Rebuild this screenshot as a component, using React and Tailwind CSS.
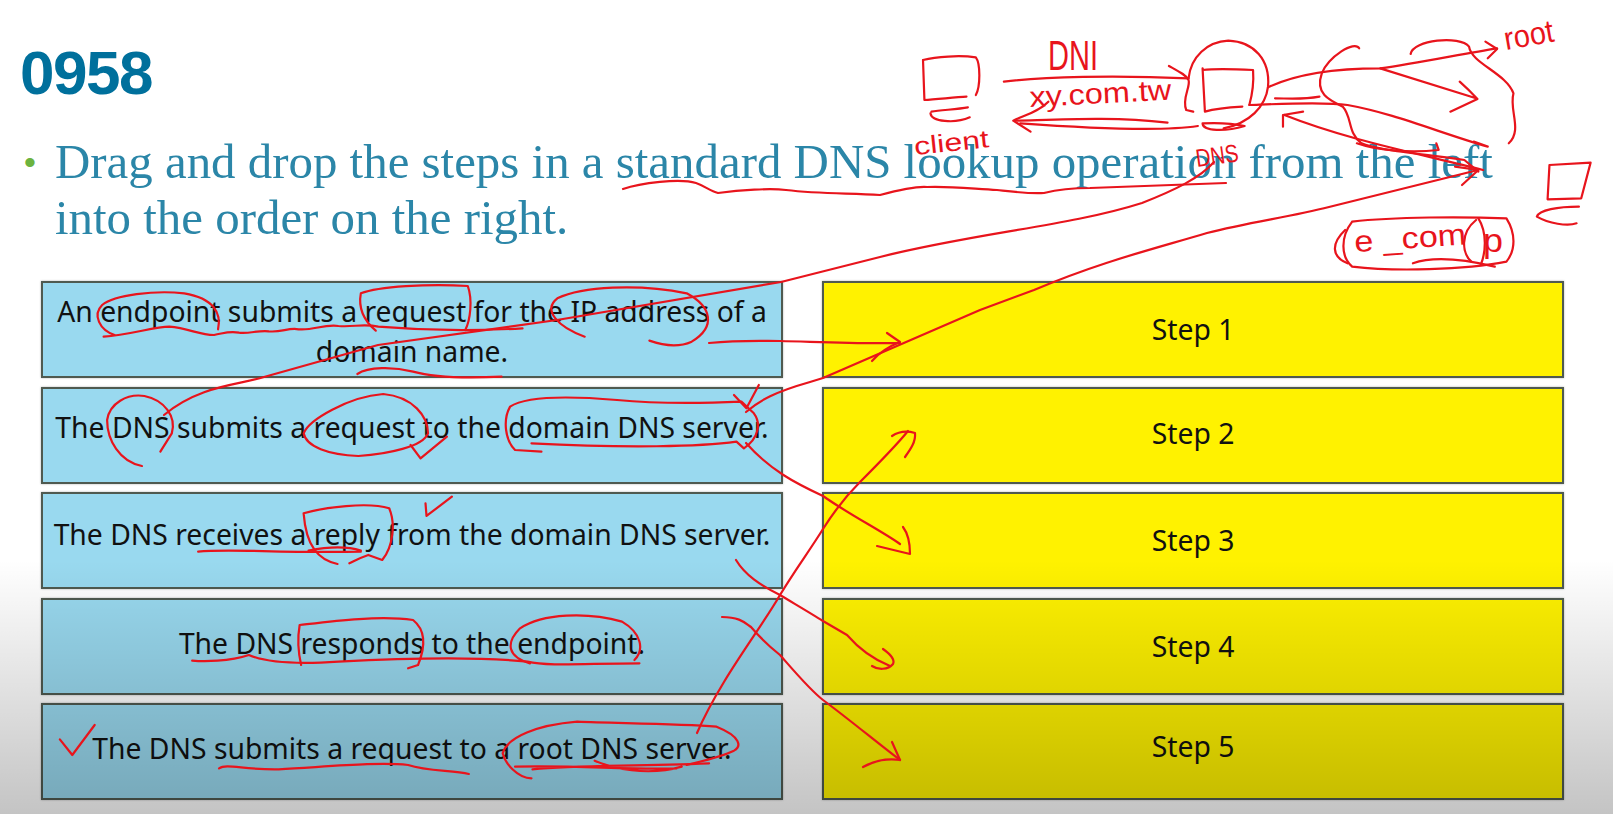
const RED = "#e8141c";

const Z1 = [
  "M92 180 C120 170 170 165 205 172 C215 190 215 260 205 285",
  "M92 180 L95 300 C120 298 160 292 185 290",
  "M110 335 C130 330 165 328 188 322 M108 340 C110 365 160 372 192 352",
  "M265 245 C350 230 500 225 660 235",
  "M618 198 C640 215 655 225 660 240 C665 260 645 295 655 330 L670 335",
  "M615 368 C500 350 400 358 290 362",
  "M680 378 C600 395 450 385 300 370",
  "M360 305 C340 335 310 345 285 362 L322 395",
  "M660 235 C665 170 700 125 745 122 C800 125 835 180 830 260 C825 320 790 370 735 385",
  "M690 205 L695 335 C720 325 750 322 775 320 M690 210 C720 205 770 208 798 210 C800 250 795 290 790 315",
  "M690 370 C690 395 740 395 780 378 C755 370 720 368 690 370",
  "M830 262 C900 215 1000 205 1070 205 C1150 190 1250 160 1320 145",
  "M1295 125 L1320 147 L1300 175",
  "M1070 205 L1275 295 M1240 245 C1260 270 1270 285 1278 297 L1220 335",
  "M790 315 C850 312 950 305 1000 315 C1100 340 1200 400 1300 440 L1270 425",
  "M845 295 C870 295 900 300 940 290",
  "M1290 510 C1150 460 1000 420 865 345",
  "M905 335 L862 345 L862 380",
  "M1025 145 C1015 120 960 170 945 220 C930 280 960 300 990 320 C1010 350 1000 400 1030 430 C1060 450 1150 460 1250 480 L1280 515",
  "M1135 162 C1140 120 1240 105 1260 140 C1265 190 1340 220 1355 280 C1345 330 1375 390 1345 430",
  "M1020 430 C1060 450 1130 460 1195 450 L1190 430",
  "M1230 500 L1280 510 L1245 555",
  "M1010 665 C1100 650 1250 650 1340 655 C1360 700 1360 750 1340 785 C1250 810 1100 815 1010 800 C985 770 985 710 1010 665",
  "M995 690 C965 730 965 770 1000 790",
  "M1275 660 C1240 700 1245 760 1265 785 M1280 655 C1300 700 1295 760 1285 795",
  "M1140 790 C1180 770 1240 775 1315 800",
  "M1432 495 L1520 488 L1500 595 L1428 598 L1432 495",
  "M1495 620 C1450 620 1410 630 1405 650 C1430 670 1470 680 1490 670",
];

const Z3 = [
  "M378 178 C385 130 370 85 310 70 C250 60 170 75 145 105 C125 135 140 180 170 195",
  "M148 200 C200 195 250 170 280 170 C320 175 340 195 370 195 C390 190 400 182 420 188 C440 192 460 180 480 184 C505 188 520 172 540 178 C570 182 590 162 620 168 C650 172 670 160 700 170 C780 180 880 185 990 175",
  "M695 182 C670 150 660 110 665 70 C700 50 800 40 880 48 C890 90 885 150 875 180",
  "M1115 200 C1060 170 1030 120 1060 85 C1110 50 1220 40 1320 70 C1370 110 1380 170 1330 215 C1300 235 1270 225 1245 212",
  "M658 312 C680 290 730 290 770 305 C810 322 880 325 948 320",
  "M225 588 C180 575 155 510 155 450 C160 400 195 370 230 378 C270 390 295 440 285 490 L262 545",
  "M660 558 C600 555 555 530 550 490 C560 450 640 380 710 372 C770 380 800 440 800 490 C790 530 720 552 660 558",
  "M765 525 L785 565 L838 500",
  "M1028 545 L975 540 C955 510 950 450 965 410 C1000 375 1100 380 1180 390 C1250 400 1350 400 1430 395 L1455 430 C1470 460 1465 505 1435 535 L1420 515 C1350 530 1200 535 1008 520",
  "M1415 375 L1440 415 L1465 345",
  "M795 700 L797 738 L848 680",
  "M618 882 C580 870 555 830 550 730 C590 712 680 695 722 715 C735 760 730 830 708 870 L680 855 C660 865 650 875 642 880",
  "M338 845 C400 835 500 850 665 845 M560 842 C600 830 640 830 665 842",
];

const Z4 = [
  "M326 362 C350 365 400 365 440 345 C470 365 520 375 620 365 C750 355 900 350 1000 365 C1040 380 1120 370 1225 370",
  "M545 375 C538 330 538 290 542 255 C600 245 700 225 770 240 C795 270 795 320 780 375 L760 385",
  "M1005 370 C960 350 955 310 985 265 C1030 220 1120 215 1190 245 C1230 280 1235 330 1215 360",
  "M60 598 L85 645 L130 555",
  "M380 685 C395 670 430 690 500 688 C600 680 700 665 760 675 C800 695 850 690 882 702",
  "M1008 715 C980 715 955 670 950 640 C960 590 1020 555 1100 545 C1180 550 1300 550 1380 560 C1430 590 1430 620 1415 632 C1390 650 1360 660 1320 675",
  "M975 680 C1100 675 1200 690 1300 685 M1010 688 C1100 675 1200 680 1365 670 M1135 662 C1170 685 1240 710 1310 680",
];

const PAGE = [
  "M164 415 C200 385 240 385 264 377 L378 345 L557 320 L781 282 L880 257 C975 233 1070 226 1142 203 C1175 190 1200 178 1214 162",
  "M746 412 C760 400 775 392 810 382 L823 378 L980 310 L1034 290 C1100 262 1150 250 1207 233 C1250 222 1290 217 1329 207 L1478 170",
  "M709 343 C740 340 760 341 780 341 C820 342 860 344 900 343",
  "M887 333 L900 342 C885 348 878 354 872 361",
  "M746 443 C770 470 795 483 823 496 C850 515 880 530 900 544",
  "M903 527 C909 535 910 545 910 554 L877 546",
  "M697 733 C720 680 760 630 780 595 C795 570 810 550 823 529 C835 510 850 492 860 482 C880 462 895 447 908 431",
  "M892 436 C898 432 905 430 915 433 C916 442 910 450 905 457",
  "M736 560 C745 575 760 585 780 595 C800 607 812 614 823 621 L847 635 C860 650 875 660 890 666",
  "M883 649 C890 654 895 660 893 664 C888 670 878 670 872 666",
  "M722 617 C740 617 745 623 751 627 C762 640 770 647 780 655 C795 672 810 690 823 700 C850 720 880 745 900 760",
  "M892 742 L900 760 C885 758 872 762 863 767",
  "M623 189 C640 183 680 178 696 183 C705 186 710 191 718 193 C740 190 770 188 786 190 C820 194 850 193 880 195 C895 191 915 186 927 187 C950 186 975 189 997 190 C1015 192 1030 194 1044 193 C1060 189 1075 188 1090 188 L1226 183",
];

const INK = [
  { t: "DNI", x: 1048, y: 70, w: 50, s: 42, a: 0 },
  { t: "xy.com.tw", x: 1030, y: 107, w: 142, s: 29, a: -3 },
  { t: "client", x: 915, y: 155, w: 75, s: 25, a: -6 },
  { t: "DNS", x: 1197, y: 167, w: 43, s: 25, a: -8 },
  { t: "root", x: 1506, y: 50, w: 50, s: 32, a: -10 },
  { t: "e _com", x: 1355, y: 252, w: 112, s: 30, a: -4 },
  { t: "p", x: 1483, y: 252, w: 20, s: 34, a: 0 },
];

function Strokes({ list, transform }) {
  return (
    <g transform={transform}>
      {list.map((d) => (
        <path key={d} d={d} fill="none" stroke={RED} strokeWidth="2.2" strokeLinecap="round" strokeLinejoin="round" vectorEffect="non-scaling-stroke" />
      ))}
    </g>
  );
}

function Annotations() {
  return (
    <svg className="absolute left-0 top-0 w-[1613px] h-[814px] pointer-events-none" viewBox="0 0 1613 814">
      <Strokes list={PAGE} />
      <Strokes list={Z1} transform="translate(880 0) scale(0.4675 0.3333)" />
      <Strokes list={Z3} transform="translate(30 270) scale(0.4975 0.3333)" />
      <Strokes list={Z4} transform="translate(30 540) scale(0.4975 0.3333)" />
      {INK.map(({ t, x, y, w, s, a }) => (
        <text key={t} x={x} y={y} fontSize={s} textLength={w} lengthAdjust="spacingAndGlyphs" transform={`rotate(${a} ${x} ${y})`} fontFamily="'Liberation Sans', sans-serif" fill={RED}>
          {t}
        </text>
      ))}
    </svg>
  );
}

const LEFT = [
  { t: <>An endpoint submits a request for the IP address of a<br />domain name.</>, c: "pt-[2px]" },
  { t: "The DNS submits a request to the domain DNS server.", c: "pb-[17px]" },
  { t: "The DNS receives a reply from the domain DNS server.", c: "pb-[14px]" },
  { t: "The DNS responds to the endpoint.", c: "pb-[6px]" },
  { t: "The DNS submits a request to a root DNS server.", c: "pb-[7px]" },
];
const RIGHT = [
  { t: "Step 1", c: "pb-[2px]" },
  { t: "Step 2", c: "pb-[4px]" },
  { t: "Step 3", c: "pb-[2px]" },
  { t: "Step 4", c: "" },
  { t: "Step 5", c: "pb-[11px]" },
];

function Box({ tone, c, children }) {
  return (
    <div className={`h-[97px] border-2 border-[#4f5a50] flex items-center justify-center text-center text-[#111] font-['Noto_Sans',sans-serif] text-[28.3px] leading-[40px] shadow-[0_0_2px_rgba(0,0,0,0.3)] ${tone} ${c}`}>
      <span>{children}</span>
    </div>
  );
}

export default function App() {
  return (
    <div className="relative w-[1613px] h-[814px] overflow-hidden bg-white">
      <h1 className="pl-[20px] pt-[37px] font-['Liberation_Sans',sans-serif] font-bold text-[62px] leading-[72px] tracking-[-1.5px] text-[#00709c]">0958</h1>
      <div className="mt-[25px] pl-[24px] flex items-start gap-[18px] text-[48.9px] leading-[56px] font-['Liberation_Serif',serif] text-[#2b86a8]">
        <span className="text-[#6cb33f] font-['Liberation_Sans',sans-serif] text-[34px] w-[13px]">•</span>
        <p>Drag and drop the steps in a standard DNS lookup operation from the left<br />into the order on the right.</p>
      </div>
      <div className="mt-[35px] pl-[41px] flex gap-[39px]">
        <div className="w-[742px] flex flex-col gap-[8.5px]">
          {LEFT.map((r, i) => (
            <Box key={i} tone="bg-[#99d9ef]" c={r.c}>{r.t}</Box>
          ))}
        </div>
        <div className="w-[742px] flex flex-col gap-[8.5px]">
          {RIGHT.map((r, i) => (
            <Box key={i} tone="bg-[#fff200]" c={r.c}>{r.t}</Box>
          ))}
        </div>
      </div>
      <div className="absolute inset-x-0 bottom-0 h-[254px] pointer-events-none bg-gradient-to-b from-transparent to-[rgba(0,0,0,0.23)]" />
      <Annotations />
    </div>
  );
}
